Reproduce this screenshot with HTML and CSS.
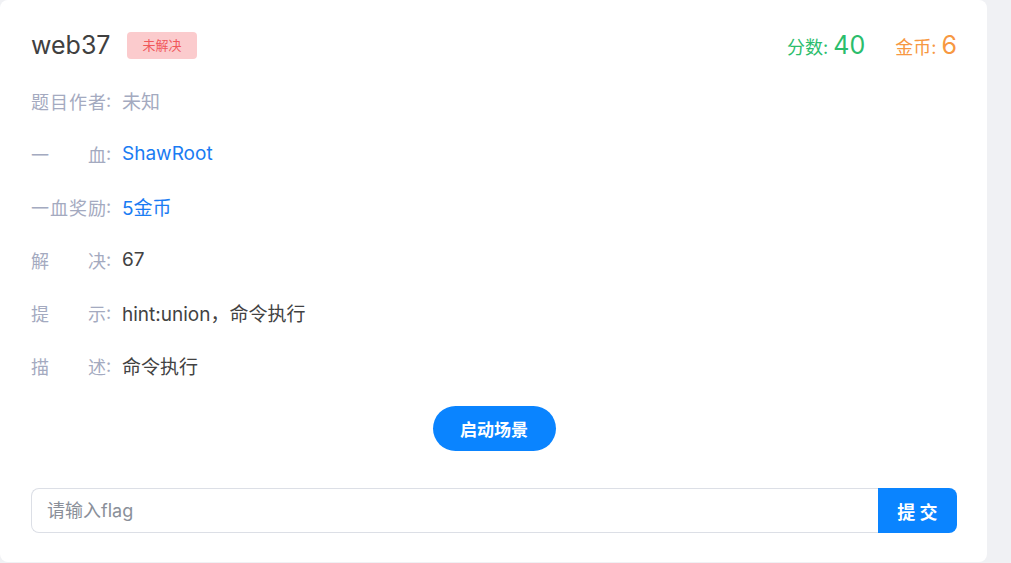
FILE: index.html
```html
<!DOCTYPE html>
<html lang="zh">
<head>
<meta charset="utf-8">
<link rel="stylesheet" href="styles.css">
</head>
<body>
<div class="card">
  <div class="header">
    <div class="title-wrap">
      <span class="title">web37</span>
      <span class="badge">未解决</span>
    </div>
    <div class="stats">
      <span class="score">分数: <b>40</b></span>
      <span class="coin">金币: <b>6</b></span>
    </div>
  </div>
  <div class="rows">
    <div class="row"><span class="label">题目作者</span><span class="colon">:</span><span class="value muted">未知</span></div>
    <div class="row"><span class="label">一血</span><span class="colon">:</span><span class="value link">ShawRoot</span></div>
    <div class="row"><span class="label">一血奖励</span><span class="colon">:</span><span class="value link">5金币</span></div>
    <div class="row"><span class="label">解决</span><span class="colon">:</span><span class="value">67</span></div>
    <div class="row"><span class="label">提示</span><span class="colon">:</span><span class="value">hint:union，命令执行</span></div>
    <div class="row"><span class="label">描述</span><span class="colon">:</span><span class="value">命令执行</span></div>
  </div>
  <div class="launch-wrap"><button class="launch">启动场景</button></div>
  <div class="submit-row">
    <input class="flag-input" type="text" placeholder="请输入flag">
    <button class="submit">提 交</button>
  </div>
</div>
</body>
</html>
```
FILE: styles.css
```css
* { box-sizing: border-box; }
html, body { margin: 0; padding: 0; }
body {
  background: #f0f1f4;
  font-family: "Inter", "Noto Sans CJK SC", sans-serif;
  width: 1011px;
  height: 563px;
  overflow: hidden;
}
.card {
  width: 987px;
  height: 562px;
  background: #fff;
  border-radius: 8px;
  padding: 20px 30px 0 31px;
  display: flex;
  flex-direction: column;
}
.header {
  height: 50px;
  display: flex;
  align-items: center;
  justify-content: space-between;
}
.title-wrap { display: flex; align-items: center; }
.title {
  font-size: 25px;
  color: #404040;
}
.badge {
  margin-left: 17px;
  background: #fbcbcd;
  color: #f0585b;
  font-size: 13px;
  height: 27px;
  line-height: 27px;
  padding: 0 15px;
  border-radius: 4px;
}
.stats { display: flex; align-items: baseline; gap: 30px; }
.score, .coin { font-size: 18px; }
.score b, .coin b { font-weight: normal; font-size: 25px; }
.score { color: #2bbd6c; }
.coin { color: #f79842; }
.rows { margin-top: 4px; display: flex; flex-direction: column; }
.row {
  height: 53px;
  display: flex;
  align-items: center;
  font-size: 18px;
}
.label {
  width: 75px;
  color: #a4aac0;
  text-align: justify;
  text-align-last: justify;
}
.colon { color: #a4aac0; width: 16px; }
.value { color: #424242; font-size: 19px; }
.value.muted { color: #a4aac0; }
.value.link { color: #1a7cf3; }
.launch-wrap { display: flex; justify-content: center; margin-top: 14px; }
.launch {
  width: 123px;
  height: 45px;
  border: none;
  border-radius: 23px;
  background: #0a84ff;
  color: #fff;
  font-family: inherit;
  font-size: 17px;
  font-weight: bold;
}
.submit-row { display: flex; margin-top: 37px; height: 45px; }
.flag-input {
  flex: 1;
  height: 45px;
  border: 1px solid #dcdfe6;
  border-right: none;
  border-radius: 8px 0 0 8px;
  padding: 0 15px;
  font-family: inherit;
  font-size: 18px;
  color: #424242;
  outline: none;
}
.flag-input::placeholder { color: #8a8f99; }
.submit {
  width: 79px;
  height: 45px;
  border: none;
  border-radius: 0 8px 8px 0;
  background: #0a84ff;
  color: #fff;
  font-family: inherit;
  font-size: 18px;
  font-weight: bold;
}
```
